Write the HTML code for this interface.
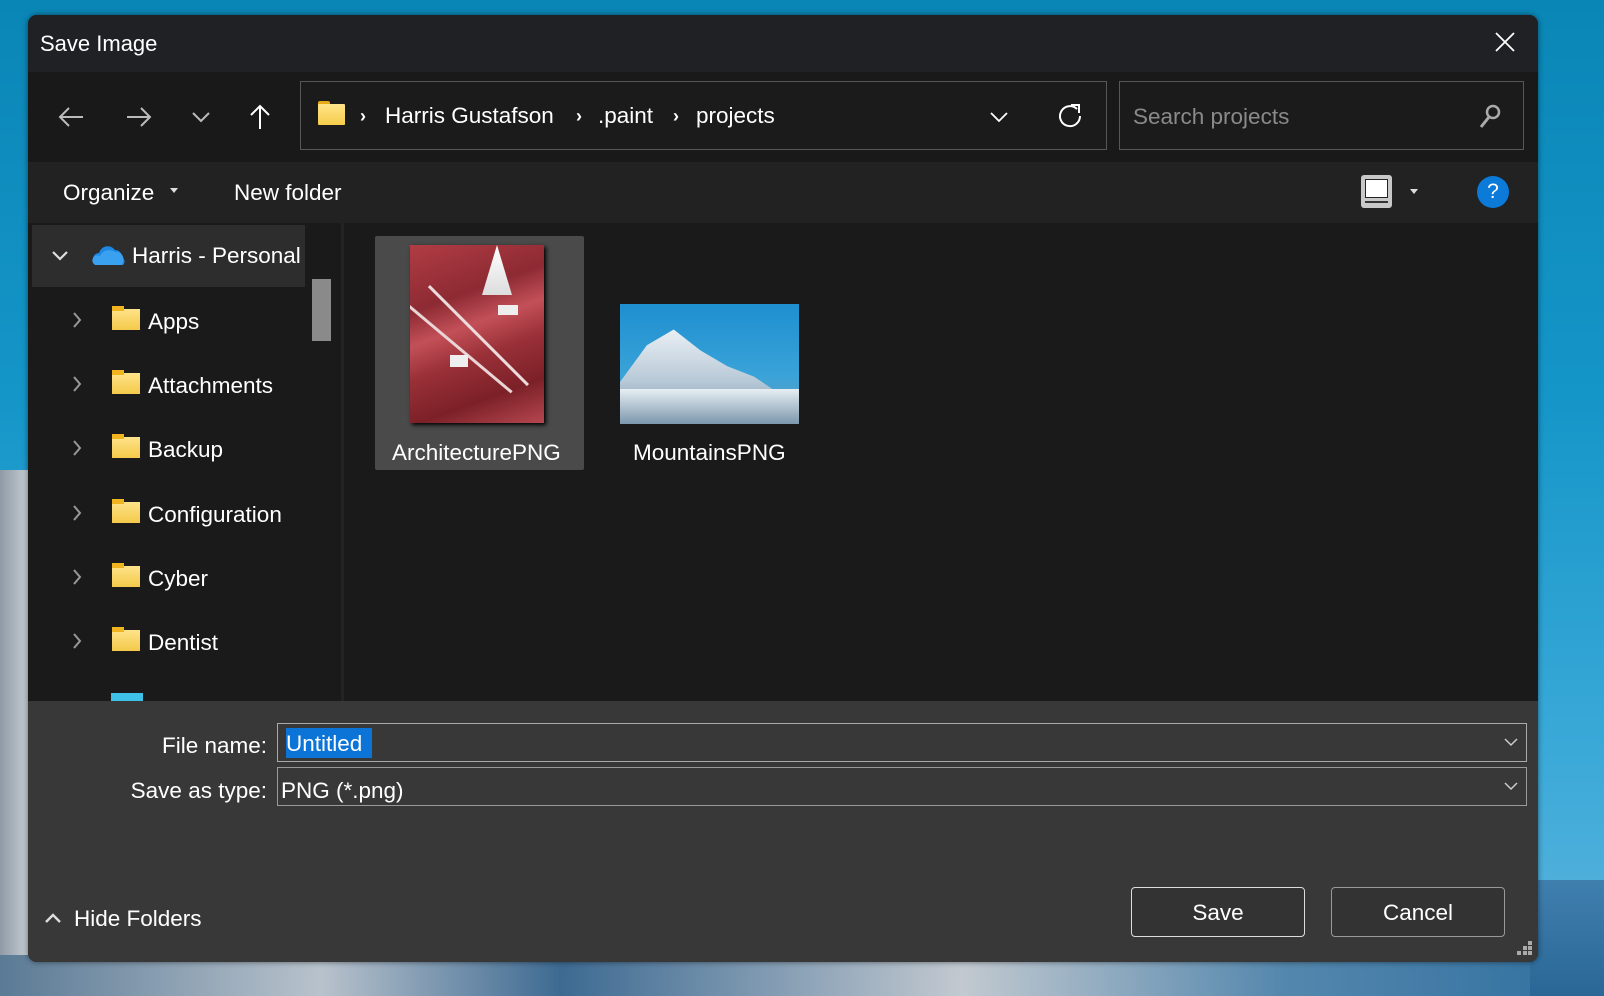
<!DOCTYPE html>
<html><head><meta charset="utf-8"><style>
*{box-sizing:border-box;margin:0;padding:0}
body{width:1604px;height:996px;overflow:hidden;position:relative;font-family:"Liberation Sans",sans-serif;color:#fff;
background:linear-gradient(180deg,#0a86b6 0%,#1596c8 40%,#3aa9d8 75%,#5fb4dc 100%)}
.snow{position:absolute;left:0;top:470px;width:60px;height:526px;background:linear-gradient(90deg,#8f9aa6,#c9d0d6 50%,#7f8b99);}
.snowb{position:absolute;left:0;top:955px;width:1604px;height:41px;background:linear-gradient(90deg,#5a7a95,#b8c2cc 20%,#3d6a92 35%,#c2c9d0 60%,#5487ad 80%,#2f6f9f)}
.snowr{position:absolute;left:1530px;top:880px;width:74px;height:116px;background:linear-gradient(180deg,#3f7fae,#2a6796)}
.dlg{position:absolute;left:28px;top:15px;width:1510px;height:947px;border-radius:9px;overflow:hidden;background:#1a1a1a;box-shadow:0 0 6px rgba(0,0,0,.5)}
.a{position:absolute}
.t{position:absolute;white-space:nowrap;font-size:22.5px;line-height:26px}
svg{position:absolute;overflow:visible}
</style></head><body>
<div class="snow"></div><div class="snowb"></div><div class="snowr"></div>
<div class="dlg">
 <div class="a" style="left:0;top:0;width:1510px;height:57px;background:#202124"></div>
 <div class="t" style="left:12px;top:16px;font-size:22px">Save Image</div>
 <svg style="left:1467px;top:17px" width="20" height="20"><path d="M1 1L19 19M19 1L1 19" stroke="#fff" stroke-width="1.8"/></svg>
 <div class="a" style="left:0;top:57px;width:1510px;height:105px;background:#191919"></div>
 <svg style="left:30px;top:91px" width="26" height="22"><path d="M25 11H2M11 2L2 11l9 9" stroke="#bbb" stroke-width="2" fill="none"/></svg>
 <svg style="left:98px;top:91px" width="26" height="22"><path d="M1 11h23M15 2l9 9-9 9" stroke="#bbb" stroke-width="2" fill="none"/></svg>
 <svg style="left:164px;top:97px" width="18" height="10"><path d="M1 1l8 8 8-8" stroke="#bbb" stroke-width="2" fill="none"/></svg>
 <svg style="left:221px;top:89px" width="22" height="26"><path d="M11 25V2M2 11l9-9 9 9" stroke="#fff" stroke-width="2" fill="none"/></svg>
 <div class="a" style="left:272px;top:66px;width:807px;height:69px;border:1px solid #575757;background:#1b1b1b"></div>
 <div class="a" style="left:290px;top:86px;width:12px;height:5px;background:#e6a917;border-radius:2px 2px 0 0"></div>
 <div class="a" style="left:290px;top:89px;width:27px;height:21px;background:linear-gradient(#ffe48a,#f6cd4a);border-radius:1px"></div>
 <div class="t" style="left:332px;top:88px;font-weight:bold;font-size:18px">›</div>
 <div class="t" style="left:357px;top:88px">Harris Gustafson</div>
 <div class="t" style="left:548px;top:88px;font-weight:bold;font-size:18px">›</div>
 <div class="t" style="left:570px;top:88px">.paint</div>
 <div class="t" style="left:645px;top:88px;font-weight:bold;font-size:18px">›</div>
 <div class="t" style="left:668px;top:88px">projects</div>
 <svg style="left:962px;top:97px" width="18" height="10"><path d="M1 1l8 8 8-8" stroke="#fff" stroke-width="1.8" fill="none"/></svg>
 <svg style="left:1030px;top:88px" width="24" height="26"><path d="M19 6A10 10 0 1 0 22 13" stroke="#fff" stroke-width="2" fill="none"/><path d="M13 2h8v8" stroke="#fff" stroke-width="2" fill="none"/></svg>
 <div class="a" style="left:1091px;top:66px;width:405px;height:69px;border:1px solid #575757;background:#1b1b1b"></div>
 <div class="t" style="left:1105px;top:89px;color:#8a8a8a">Search projects</div>
 <svg style="left:1450px;top:89px" width="24" height="26"><circle cx="15" cy="8" r="6" stroke="#aaa" stroke-width="2.5" fill="none"/><path d="M11 13L3 23" stroke="#aaa" stroke-width="3"/></svg>
 <div class="a" style="left:0;top:147px;width:1510px;height:61px;background:#222"></div>
 <div class="t" style="left:35px;top:165px">Organize</div>
 <svg style="left:142px;top:173px" width="8" height="5"><path d="M0 0h8L4 5z" fill="#ddd"/></svg>
 <div class="t" style="left:206px;top:165px">New folder</div>
 <div class="a" style="left:1333px;top:160px;width:31px;height:33px;border-radius:3px;background:#c8c8c8"></div>
 <div class="a" style="left:1337px;top:164px;width:23px;height:19px;background:#fff;border:1.5px solid #222"></div>
 <div class="a" style="left:1337px;top:186px;width:23px;height:2px;background:#333"></div>
 <svg style="left:1382px;top:174px" width="8" height="5"><path d="M0 0h8L4 5z" fill="#ddd"/></svg>
 <div class="a" style="left:1449px;top:161px;width:32px;height:32px;border-radius:50%;background:#0b7ad8;text-align:center;font-size:21px;line-height:32px">?</div>
 <div class="a" style="left:4px;top:208px;width:274px;height:478px;background:#1a1a1a"></div>
 <div class="a" style="left:4px;top:210px;width:273px;height:62px;background:#2d2d2d"></div>
 <div class="a" style="left:284px;top:264px;width:19px;height:62px;background:#8a8a8a"></div>
 <div class="a" style="left:313px;top:208px;width:3px;height:478px;background:#232323"></div>
 <svg style="left:24px;top:236px" width="16" height="10"><path d="M1 1l7 7 7-7" stroke="#ddd" stroke-width="2.2" fill="none"/></svg>
 <svg style="left:65px;top:229px" width="34" height="22"><path d="M6 21a6 6 0 0 1 0-12a9 9 0 0 1 16-3a7 7 0 0 1 7 7a5 5 0 0 1 1 8z" fill="#1d87e4"/><path d="M2 21a5 5 0 0 1 5-9a10 10 0 0 1 15-4a7 7 0 0 1 8 9a4 4 0 0 1-2 4z" fill="#3aa0f0"/></svg>
 <div class="t" style="left:104px;top:228px">Harris - Personal</div>
 <div class="a" style="left:347px;top:221px;width:209px;height:234px;background:#4a4a4a;border-radius:2px"></div>
 <div class="a" style="left:382px;top:230px;width:134px;height:178px;overflow:hidden;background:linear-gradient(160deg,#b13c44 0%,#8d2a33 30%,#c35058 45%,#9a3038 60%,#7c2028 80%,#b5474f 100%);box-shadow:2px 2px 4px #000">
   <div class="a" style="left:72px;top:0;width:30px;height:50px;background:linear-gradient(180deg,#fff,#ddd);clip-path:polygon(50% 0,100% 100%,0 100%)"></div>
   <div class="a" style="left:0;top:60px;width:134px;height:3px;background:#e9d5d5;transform:rotate(40deg);transform-origin:0 0"></div>
   <div class="a" style="left:20px;top:40px;width:140px;height:3px;background:#ecdcdc;transform:rotate(45deg);transform-origin:0 0"></div>
   <div class="a" style="left:40px;top:110px;width:18px;height:12px;background:#eee"></div>
   <div class="a" style="left:88px;top:60px;width:20px;height:10px;background:#eee"></div>
 </div>
 <div class="t" style="left:364px;top:425px">ArchitecturePNG</div>
 <div class="a" style="left:592px;top:289px;width:179px;height:120px;overflow:hidden;background:linear-gradient(180deg,#1e8fd0 0%,#3aa3d8 60%,#6a9fb8 100%)">
   <div class="a" style="left:0;top:15px;width:179px;height:105px;background:linear-gradient(180deg,#f4f7fa,#b7c8d6 60%,#6d8fa8);clip-path:polygon(0 60%,15% 25%,30% 10%,45% 30%,60% 45%,75% 55%,88% 70%,100% 85%,100% 100%,0 100%)"></div>
   <div class="a" style="left:0;top:85px;width:179px;height:35px;background:linear-gradient(180deg,#e7eef3,#7c97ad)"></div>
 </div>
 <div class="t" style="left:605px;top:425px">MountainsPNG</div>
 <div class="a" style="left:0;top:686px;width:1510px;height:261px;background:#383838"></div>
 <div class="t" style="left:0;width:239px;text-align:right;top:718px">File name:</div>
 <div class="a" style="left:249px;top:708px;width:1250px;height:39px;border:1.5px solid #aaa"></div>
 <div class="a" style="left:258px;top:713px;width:86px;height:30px;background:#0b74d6"></div>
 <div class="t" style="left:258px;top:716px">Untitled</div>
 <div class="t" style="left:0;width:239px;text-align:right;top:763px">Save as type:</div>
 <div class="a" style="left:249px;top:752px;width:1250px;height:39px;border:1px solid #9a9a9a"></div>
 <div class="t" style="left:253px;top:763px">PNG (*.png)</div>
 <svg style="left:1476px;top:723px" width="14" height="8"><path d="M1 1l6 6 6-6" stroke="#ccc" stroke-width="1.5" fill="none"/></svg>
 <svg style="left:1476px;top:767px" width="14" height="8"><path d="M1 1l6 6 6-6" stroke="#ccc" stroke-width="1.5" fill="none"/></svg>
 <div class="a" style="left:1103px;top:872px;width:174px;height:50px;border:1.5px solid #ddd;border-radius:4px;background:#333"></div>
 <div class="t" style="left:1103px;width:174px;text-align:center;top:885px">Save</div>
 <div class="a" style="left:1303px;top:872px;width:174px;height:50px;border:1px solid #999;border-radius:4px;background:#333"></div>
 <div class="t" style="left:1303px;width:174px;text-align:center;top:885px">Cancel</div>
 <svg style="left:17px;top:898px" width="16" height="10"><path d="M1 9l7-7 7 7" stroke="#ddd" stroke-width="2.4" fill="none"/></svg>
 <div class="t" style="left:46px;top:891px">Hide Folders</div>
 <svg style="left:1489px;top:926px" width="16" height="16" fill="#aaa"><rect x="11" y="0" width="4" height="4"/><rect x="6" y="5" width="4" height="4"/><rect x="11" y="5" width="4" height="4"/><rect x="0" y="10" width="4" height="4"/><rect x="6" y="10" width="4" height="4"/><rect x="11" y="10" width="4" height="4"/></svg>
 <svg style="left:44px;top:297px" width="10" height="16"><path d="M2 1l6 7-6 7" stroke="#999" stroke-width="2" fill="none"/></svg>
 <div class="a" style="left:84px;top:294px;width:28px;height:21px;background:linear-gradient(#ffe38a,#f4c94a)"></div><div class="a" style="left:84px;top:291px;width:12px;height:5px;background:#f0b41f"></div>
 <div class="t" style="left:120px;top:294px">Apps</div>
 <svg style="left:44px;top:361px" width="10" height="16"><path d="M2 1l6 7-6 7" stroke="#999" stroke-width="2" fill="none"/></svg>
 <div class="a" style="left:84px;top:358px;width:28px;height:21px;background:linear-gradient(#ffe38a,#f4c94a)"></div><div class="a" style="left:84px;top:355px;width:12px;height:5px;background:#f0b41f"></div>
 <div class="t" style="left:120px;top:358px">Attachments</div>
 <svg style="left:44px;top:425px" width="10" height="16"><path d="M2 1l6 7-6 7" stroke="#999" stroke-width="2" fill="none"/></svg>
 <div class="a" style="left:84px;top:422px;width:28px;height:21px;background:linear-gradient(#ffe38a,#f4c94a)"></div><div class="a" style="left:84px;top:419px;width:12px;height:5px;background:#f0b41f"></div>
 <div class="t" style="left:120px;top:422px">Backup</div>
 <svg style="left:44px;top:490px" width="10" height="16"><path d="M2 1l6 7-6 7" stroke="#999" stroke-width="2" fill="none"/></svg>
 <div class="a" style="left:84px;top:487px;width:28px;height:21px;background:linear-gradient(#ffe38a,#f4c94a)"></div><div class="a" style="left:84px;top:484px;width:12px;height:5px;background:#f0b41f"></div>
 <div class="t" style="left:120px;top:487px">Configuration</div>
 <svg style="left:44px;top:554px" width="10" height="16"><path d="M2 1l6 7-6 7" stroke="#999" stroke-width="2" fill="none"/></svg>
 <div class="a" style="left:84px;top:551px;width:28px;height:21px;background:linear-gradient(#ffe38a,#f4c94a)"></div><div class="a" style="left:84px;top:548px;width:12px;height:5px;background:#f0b41f"></div>
 <div class="t" style="left:120px;top:551px">Cyber</div>
 <svg style="left:44px;top:618px" width="10" height="16"><path d="M2 1l6 7-6 7" stroke="#999" stroke-width="2" fill="none"/></svg>
 <div class="a" style="left:84px;top:615px;width:28px;height:21px;background:linear-gradient(#ffe38a,#f4c94a)"></div><div class="a" style="left:84px;top:612px;width:12px;height:5px;background:#f0b41f"></div>
 <div class="t" style="left:120px;top:615px">Dentist</div>
 <div class="a" style="left:83px;top:678px;width:32px;height:8px;background:#3fc0e6"></div>
</div>
</body></html>
